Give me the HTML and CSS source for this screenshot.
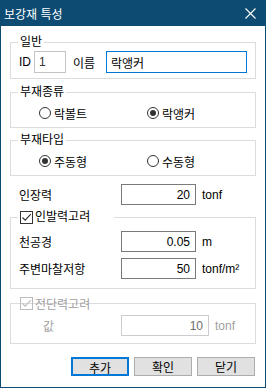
FILE: index.html
```html
<!DOCTYPE html>
<html lang="ko">
  <head>
    <meta charset="UTF-8" />
    <title>보강재 특성</title>
    <link rel="stylesheet" href="styles.css">
  </head>
  <body>
    <div class="dialog">
      <div class="titlebar">
        <span class="title">보강재 특성</span>
        <svg class="close" width="11" height="11" viewBox="0 0 11 11">
          <path d="M0.5 0.5L10.5 10.5M10.5 0.5L0.5 10.5" stroke="#fff" stroke-width="1.1" fill="none" />
        </svg>
      </div>

      <div class="content">
        <fieldset class="group general">
          <legend>일반</legend>
          <div class="row">
            <span class="lbl lbl-id">ID</span>
            <input class="box box-id" value="1" readonly>
            <span class="lbl lbl-name">이름</span>
            <input class="box box-name" value="락앵커">
          </div>
        </fieldset>

        <fieldset class="group kind">
          <legend>부재종류</legend>
          <div class="radios">
            <span class="radio"><span class="dot"></span>락볼트</span>
            <span class="radio"><span class="dot on"></span>락앵커</span>
          </div>
        </fieldset>

        <fieldset class="group type">
          <legend>부재타입</legend>
          <div class="radios">
            <span class="radio"><span class="dot on"></span>주동형</span>
            <span class="radio"><span class="dot"></span>수동형</span>
          </div>
        </fieldset>

        <div class="row field tension">
          <span class="lbl">인장력</span>
          <input class="box num" value="20">
          <span class="unit">tonf</span>
        </div>

        <fieldset class="group pullout">
          <legend>
            <span class="check">
              <span class="tick">
                <svg width="11" height="11" viewBox="0 0 11 11"><path d="M1.5 5.5L4.2 8.2L9.8 2.2" stroke="#333" stroke-width="1.2" fill="none" /></svg>
              </span>
              인발력고려
            </span>
          </legend>
          <div class="row field">
            <span class="lbl">천공경</span>
            <input class="box num" value="0.05">
            <span class="unit">m</span>
          </div>
          <div class="row field">
            <span class="lbl">주변마찰저항</span>
            <input class="box num" value="50">
            <span class="unit">tonf/m²</span>
          </div>
        </fieldset>

        <div class="group shear">
          <span class="check disabled overlay">
            <span class="tick">
              <svg width="11" height="11" viewBox="0 0 11 11"><path d="M1.5 5.5L4.2 8.2L9.8 2.2" stroke="#bcbcbc" stroke-width="1.2" fill="none" /></svg>
            </span>
            전단력고려
          </span>
          <div class="row field">
            <span class="lbl lbl-val">값</span>
            <input class="box num off" value="10" disabled>
            <span class="unit">tonf</span>
          </div>
        </div>

        <div class="buttons">
          <button class="btn default">추가</button>
          <button class="btn">확인</button>
          <button class="btn">닫기</button>
        </div>
      </div>
    </div>
  </body>
</html>
```

FILE: styles.css
```css
* {
  box-sizing: border-box;
}
body {
  margin: 0;
  font-family: "Liberation Sans", "Noto Sans CJK KR", sans-serif;
  font-size: 12px;
  color: #000;
  background: #fff;
}
.dialog {
  width: 266px;
  height: 388px;
  border: 1px solid #0d4b72;
  background: #fff;
}
.titlebar {
  height: 25px;
  background: #0d4b72;
  color: #fff;
  display: flex;
  align-items: center;
  justify-content: space-between;
  padding: 0 9px 0 3px;
}
.title {
  font-size: 12px;
}
.close {
  display: block;
}
.content {
  padding: 0 9px;
}
.group {
  border: 1px solid #dcdcdc;
  margin: 0;
  padding: 0 0 0 7px;
  min-width: 0;
}
.group legend {
  padding: 0 2px;
  height: 16px;
  line-height: 16px;
}
.row {
  display: flex;
  align-items: center;
}
.lbl {
  white-space: nowrap;
}
.box {
  appearance: none;
  margin: 0;
  border: 1px solid #7a7a7a;
  background: #fff;
  font: inherit;
  color: #000;
  height: 22px;
  padding: 0 4px;
  outline: none;
}

/* 일반 */
.general {
  margin-top: 8px;
  padding-top: 1px;
  padding-bottom: 5px;
}
.lbl-id {
  margin-left: 1px;
  width: 15px;
}
.box-id {
  width: 32px;
  border-color: #c4c4c4;
  color: #333;
}
.lbl-name {
  margin-left: 7px;
  width: 33px;
}
.box-name {
  width: 141px;
  border-color: #0078d7;
}

/* 라디오 그룹 */
.kind {
  margin-top: 5px;
  padding-top: 5px;
  padding-bottom: 6px;
}
.type {
  margin-top: 4px;
  padding-top: 5px;
  padding-bottom: 6px;
}
.radios {
  display: flex;
  height: 16px;
  padding-left: 21px;
}
.radio {
  display: flex;
  align-items: center;
  width: 118px;
}
.dot {
  width: 12px;
  height: 12px;
  border: 1px solid #333;
  border-radius: 50%;
  margin-right: 3px;
  display: flex;
  align-items: center;
  justify-content: center;
}
.dot.on::after {
  content: "";
  width: 6px;
  height: 6px;
  border-radius: 50%;
  background: #333;
}

/* 입력 줄 */
.field .box {
  height: 21px;
}
.num {
  text-align: right;
  padding-right: 5px;
  width: 75px;
}
.field .lbl {
  width: 102px;
  margin-left: 1px;
}
.unit {
  margin-left: 6px;
}
.tension {
  margin-top: 8px;
}
.tension .lbl {
  margin-left: 9px;
}

/* 체크박스 */
.check {
  display: flex;
  align-items: center;
  height: 16px;
  white-space: nowrap;
}
.tick {
  width: 13px;
  height: 13px;
  border: 1px solid #333;
  background: #fff;
  margin-right: 2px;
  display: flex;
  align-items: center;
  justify-content: center;
}
.tick svg {
  display: block;
}
.pullout {
  margin-top: 4px;
  padding-bottom: 9px;
}
.pullout legend {
  width: 96px;
}
.pullout .field {
  margin-top: 6px;
}

/* 전단력고려 (비활성) */
.shear {
  position: relative;
  margin-top: 14px;
  padding: 11px 0 7px 0;
  color: #a0a0a0;
}
.overlay {
  position: absolute;
  left: 9px;
  top: -9px;
}
.check.disabled .tick {
  border-color: #bcbcbc;
  background: transparent;
}
.lbl-val {
  margin-left: 32px !important;
  width: 78px !important;
}
.num.off {
  width: 88px;
  border-color: #cccccc;
  color: #6d6d6d;
  background: #fff;
}

/* 버튼 */
.buttons {
  display: flex;
  justify-content: flex-end;
  gap: 5px;
  margin-top: 13px;
  padding-right: 1px;
}
.btn {
  width: 58px;
  height: 19px;
  margin: 0;
  padding: 0;
  border: 1px solid #adadad;
  background: #e1e1e1;
  font: inherit;
  color: #000;
}
.btn.default {
  border: 2px solid #0078d7;
}
```
